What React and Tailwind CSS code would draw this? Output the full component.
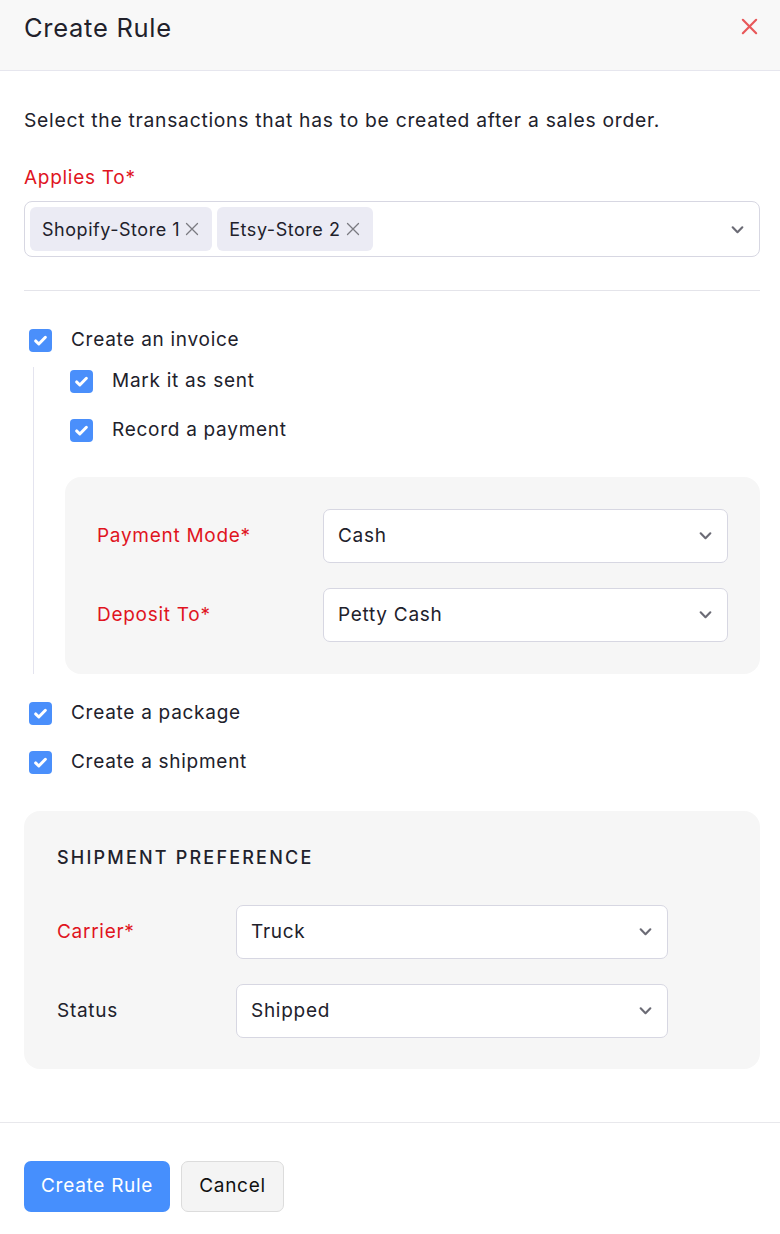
import React from "react";

const Check = ({ className = "" }) => (
  <span className={"flex h-[23px] w-[23px] shrink-0 items-center justify-center rounded-[4px] bg-[#4a8ffb] " + className}>
    <svg width="17" height="17" viewBox="0 0 16 16" fill="none">
      <path d="M3.4 8.4l3 2.9 6.2-6.4" stroke="#fff" strokeWidth="2.8" strokeLinecap="round" strokeLinejoin="round" />
    </svg>
  </span>
);

const Chevron = () => (
  <svg width="15" height="15" viewBox="0 0 14 14" fill="none">
    <path d="M2.5 5l4.5 4.5L11.5 5" stroke="#6b6b75" strokeWidth="2" strokeLinecap="round" strokeLinejoin="round" />
  </svg>
);

const SmallX = () => (
  <svg width="14" height="14" viewBox="0 0 14 14" fill="none">
    <path d="M1.5 1.5l11 11M12.5 1.5l-11 11" stroke="#7a7a80" strokeWidth="1.3" strokeLinecap="round" />
  </svg>
);

const Select = ({ value, w }) => (
  <div className={"flex h-[54px] items-center justify-between rounded-[7px] border border-[#d7d7e2] bg-white pl-[14px] pr-[14px] text-[19px] text-[#21212b] " + w}>
    <span>{value}</span>
    <Chevron />
  </div>
);

const CheckRow = ({ label, className = "" }) => (
  <div className={"flex items-center " + className}>
    <Check />
    <span className="ml-[19px] text-[19px] text-[#21212b]">{label}</span>
  </div>
);

const Chip = ({ label }) => (
  <span className="flex h-[44px] items-center rounded-[6px] bg-[#ebebf4] pl-[12px] pr-[13px] text-[18px] tracking-[0.03em] text-[#21212b]">
    <span>{label}</span>
    <span className="ml-[5px] flex">
      <SmallX />
    </span>
  </span>
);

export default function App() {
  return (
    <div className="min-h-[1234px] w-[780px] bg-white tracking-[0.045em]" style={{ fontFamily: "Inter, 'Noto Sans', sans-serif" }}>
      <div className="flex h-[71px] items-start justify-between border-b border-[#e6e6ee] bg-[#f8f8f8] pl-[24px] pr-[21px] pt-[12px]">
        <h1 className="text-[25.5px] leading-[32px] text-[#21212b]">Create Rule</h1>
        <svg width="19" height="19" viewBox="0 0 20 20" fill="none" className="mt-[5px]">
          <path d="M3 3l14 14M17 3L3 17" stroke="#e8585a" strokeWidth="2.3" strokeLinecap="round" />
        </svg>
      </div>

      <div className="pl-[24px] pr-[20px]">
        <p className="mt-[35px] text-[19.3px] text-[#21212b]">Select the transactions that has to be created after a sales order.</p>
        <div className="mt-[29px] text-[19px] text-[#e0141e]">Applies To*</div>
        <div className="mt-[9px] flex h-[56px] items-center justify-between rounded-[8px] border border-[#d7d7e2] pl-[5px] pr-[14px]">
          <div className="flex gap-[5px]">
            <Chip label="Shopify-Store 1" />
            <Chip label="Etsy-Store 2" />
          </div>
          <Chevron />
        </div>

        <div className="mt-[33px] border-t border-[#e4e4ea]" />

        <CheckRow label="Create an invoice" className="mt-[35px] pl-[5px]" />
        <div className="ml-[9px] mt-[12px] flex flex-col border-l border-[#e4e4ef]">
          <CheckRow label="Mark it as sent" className="ml-[36px] mt-[0px]" />
          <CheckRow label="Record a payment" className="ml-[36px] mt-[21px]" />
          <div className="ml-[31px] mt-[32px] flex flex-col gap-[25px] rounded-[16px] bg-[#f6f6f6] px-[32px] py-[32px]">
            <div className="flex items-center">
              <span className="w-[226px] text-[19px] text-[#e0141e]">Payment Mode*</span>
              <Select value="Cash" w="w-[405px]" />
            </div>
            <div className="flex items-center">
              <span className="w-[226px] text-[19px] text-[#e0141e]">Deposit To*</span>
              <Select value="Petty Cash" w="w-[405px]" />
            </div>
          </div>
        </div>

        <CheckRow label="Create a package" className="mt-[25px] pl-[5px]" />
        <CheckRow label="Create a shipment" className="mt-[21px] pl-[5px]" />

        <div className="mt-[34px] rounded-[16px] bg-[#f6f6f6] px-[33px] pb-[31px] pt-[33px]">
          <div className="text-[18px] font-medium tracking-[2.2px] text-[#21212b]">SHIPMENT PREFERENCE</div>
          <div className="mt-[34px] flex flex-col gap-[25px]">
            <div className="flex items-center">
              <span className="w-[179px] text-[19px] text-[#e0141e]">Carrier*</span>
              <Select value="Truck" w="w-[432px]" />
            </div>
            <div className="flex items-center">
              <span className="w-[179px] text-[19px] text-[#21212b]">Status</span>
              <Select value="Shipped" w="w-[432px]" />
            </div>
          </div>
        </div>
      </div>

      <div className="mt-[53px] flex gap-[11px] border-t border-[#e8e8ec] px-[24px] pt-[38px]">
        <button className="h-[51px] rounded-[7px] bg-[#468ffd] px-[17px] text-[19px] text-white">Create Rule</button>
        <button className="h-[51px] rounded-[7px] border border-[#dcdcdc] bg-[#f4f4f4] px-[17px] text-[19px] text-[#111]">Cancel</button>
      </div>
    </div>
  );
}
